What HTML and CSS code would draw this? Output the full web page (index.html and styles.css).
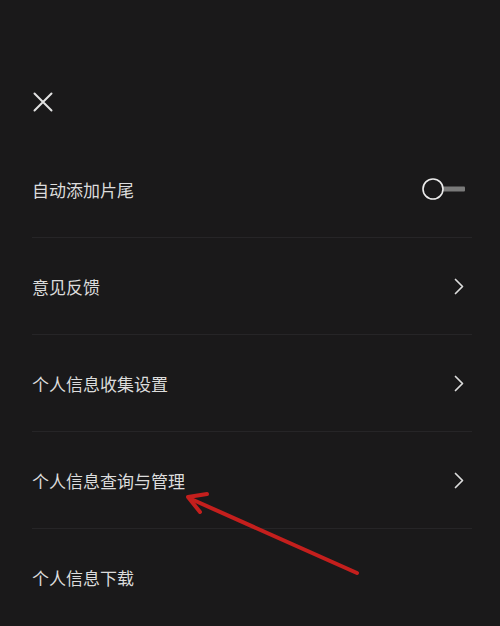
FILE: index.html
```html
<!DOCTYPE html>
<html lang="zh">
<head>
<meta charset="utf-8">
<link rel="stylesheet" href="styles.css">
</head>
<body>
<div class="page">
  <header class="header">
    <svg class="close" width="20" height="20" viewBox="0 0 20 20">
      <path d="M1.5 1.5 L18.5 18.5 M18.5 1.5 L1.5 18.5" stroke="#e2e2e2" stroke-width="2" stroke-linecap="round" fill="none"/>
    </svg>
  </header>
  <ul class="list">
    <li class="row">
      <span class="label">自动添加片尾</span>
      <span class="toggle">
        <svg width="44" height="24" viewBox="0 0 44 24">
          <rect x="21" y="9.5" width="22" height="5" rx="1" fill="#7a7a7a"/>
          <circle cx="11" cy="12" r="10" fill="#1a191a" stroke="#ececec" stroke-width="1.6"/>
        </svg>
      </span>
    </li>
    <li class="row">
      <span class="label">意见反馈</span>
      <svg class="chev" width="10" height="17" viewBox="0 0 10 17"><path d="M1.5 1.5 L8.5 8.5 L1.5 15.5" stroke="#dcdcdc" stroke-width="1.7" fill="none" stroke-linecap="round" stroke-linejoin="round"/></svg>
    </li>
    <li class="row">
      <span class="label">个人信息收集设置</span>
      <svg class="chev" width="10" height="17" viewBox="0 0 10 17"><path d="M1.5 1.5 L8.5 8.5 L1.5 15.5" stroke="#dcdcdc" stroke-width="1.7" fill="none" stroke-linecap="round" stroke-linejoin="round"/></svg>
    </li>
    <li class="row">
      <span class="label">个人信息查询与管理</span>
      <svg class="chev" width="10" height="17" viewBox="0 0 10 17"><path d="M1.5 1.5 L8.5 8.5 L1.5 15.5" stroke="#dcdcdc" stroke-width="1.7" fill="none" stroke-linecap="round" stroke-linejoin="round"/></svg>
    </li>
    <li class="row last">
      <span class="label">个人信息下载</span>
    </li>
  </ul>
  <svg class="arrow" width="500" height="626" viewBox="0 0 500 626">
    <line x1="357" y1="573" x2="191" y2="499" stroke="#c41f1d" stroke-width="4" stroke-linecap="round"/>
    <polyline points="207,494 188,497 200,512" stroke="#c41f1d" stroke-width="4" fill="none" stroke-linecap="round" stroke-linejoin="round"/>
  </svg>
</div>
</body>
</html>
```

FILE: styles.css
```css
html, body {
  margin: 0;
  padding: 0;
  background: #1a191a;
}
.page {
  position: relative;
  width: 500px;
  height: 626px;
  overflow: hidden;
  background: #1a191a;
  font-family: "Noto Sans CJK SC", "Noto Sans", sans-serif;
  color: #dcdcdc;
}
.header {
  height: 141px;
  box-sizing: border-box;
  padding: 92px 0 0 33px;
}
.close {
  display: block;
}
.list {
  list-style: none;
  margin: 0;
  padding: 0 28px 0 32px;
}
.row {
  height: 96px;
  border-bottom: 1px solid #262527;
  display: flex;
  align-items: center;
  justify-content: space-between;
}
.row.last {
  border-bottom: none;
}
.label {
  font-size: 17px;
  letter-spacing: 0;
}
.toggle {
  display: flex;
  margin-right: 6px;
}
.toggle svg {
  display: block;
}
.chev {
  display: block;
  margin-right: 8px;
}
.arrow {
  position: absolute;
  left: 0;
  top: 0;
  pointer-events: none;
}
```
